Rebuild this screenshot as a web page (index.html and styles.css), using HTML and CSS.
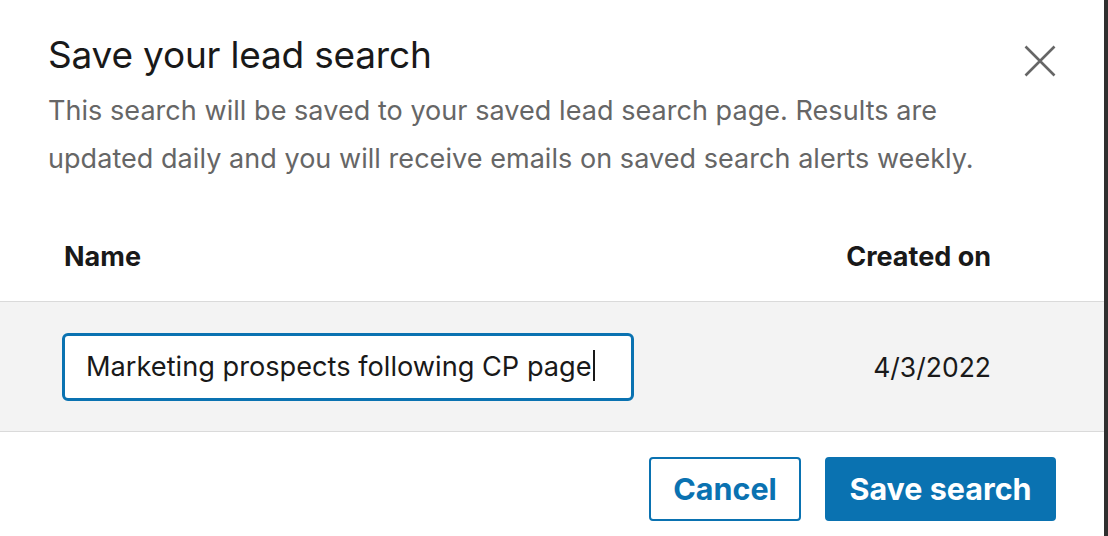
FILE: index.html
```html
<!DOCTYPE html>
<html lang="en">
<head>
<meta charset="utf-8">
<title>Save your lead search</title>
<link rel="stylesheet" href="styles.css">
</head>
<body>
<div class="dialog">
  <div class="header">
    <div class="heading">
      <h2 class="title">Save your lead search</h2>
      <p class="desc">This search will be saved to your saved lead search page. Results are<br>updated daily and you will receive emails on saved search alerts weekly.</p>
    </div>
    <button class="close" aria-label="Dismiss">
      <svg width="32" height="32" viewBox="0 0 32 32" aria-hidden="true"><path d="M1.5 1.5 L30.5 30.5 M30.5 1.5 L1.5 30.5" stroke="#666" stroke-width="2.6" fill="none"/></svg>
    </button>
  </div>
  <div class="table">
    <div class="thead">
      <span class="th">Name</span>
      <span class="th">Created on</span>
    </div>
    <div class="trow">
      <div class="field"><span class="field-text">Marketing prospects following CP page</span><span class="caret"></span></div>
      <span class="date">4/3/2022</span>
    </div>
  </div>
  <div class="footer">
    <button class="btn btn-secondary">Cancel</button>
    <button class="btn btn-primary">Save search</button>
  </div>
</div>
</body>
</html>
```
FILE: styles.css
```css
* { box-sizing: border-box; }
html, body { margin: 0; padding: 0; }
body {
  background: #2f2f2f;
  width: 1108px;
  height: 536px;
  overflow: hidden;
  font-family: Inter, "Noto Sans", "Liberation Sans", sans-serif;
}
.dialog {
  width: 1104px;
  height: 536px;
  background: #fff;
  display: flex;
  flex-direction: column;
}
.header {
  display: flex;
  justify-content: space-between;
  align-items: flex-start;
  padding: 31px 48px 0 48px;
}
.title {
  margin: 0;
  font-size: 37px;
  line-height: 48px;
  font-weight: 400;
  letter-spacing: -0.2px;
  color: #191919;
}
.desc {
  margin: 8px 0 0 0;
  font-size: 27px;
  line-height: 48px;
  letter-spacing: 0.05px;
  color: #666;
}
.close {
  margin-top: 14px;
  padding: 0;
  border: 0;
  background: none;
  width: 32px;
  height: 32px;
  display: block;
}
.close svg { display: block; }
.table { margin-top: 34px; }
.thead {
  display: flex;
  justify-content: space-between;
  padding: 24px 113px 28px 64px;
  border-bottom: 1px solid #dadada;
}
.th {
  font-size: 27px;
  line-height: 32px;
  font-weight: 700;
  color: #191919;
}
.trow {
  display: flex;
  justify-content: space-between;
  align-items: center;
  height: 130px;
  padding: 0 113px 0 62px;
  background: #f3f3f3;
  border-bottom: 1px solid #dadada;
}
.field {
  width: 572px;
  height: 68px;
  border: 3px solid #0a72b1;
  border-radius: 6px;
  background: #fff;
  padding-left: 21px;
  display: flex;
  align-items: center;
}
.field-text {
  font-size: 27.2px;
  line-height: 62px;
  color: #191919;
  white-space: nowrap;
}
.caret {
  width: 2px;
  height: 31px;
  background: #191919;
  margin-left: 1px;
  margin-top: -2px;
}
.date {
  font-size: 26.5px;
  line-height: 62px;
  color: #191919;
}
.footer {
  display: flex;
  justify-content: flex-end;
  gap: 24px;
  padding: 25px 48px 0 0;
}
.btn {
  height: 64px;
  border-radius: 4px;
  font-family: inherit;
  font-size: 30.5px;
  line-height: 60px;
  font-weight: 700;
  padding: 0;
  text-align: center;
}
.btn-secondary {
  width: 152px;
  border: 2px solid #0a72b1;
  background: #fff;
  color: #0a72b1;
}
.btn-primary {
  width: 231px;
  border: 2px solid #0a72b1;
  background: #0a72b1;
  color: #fff;
}
```
